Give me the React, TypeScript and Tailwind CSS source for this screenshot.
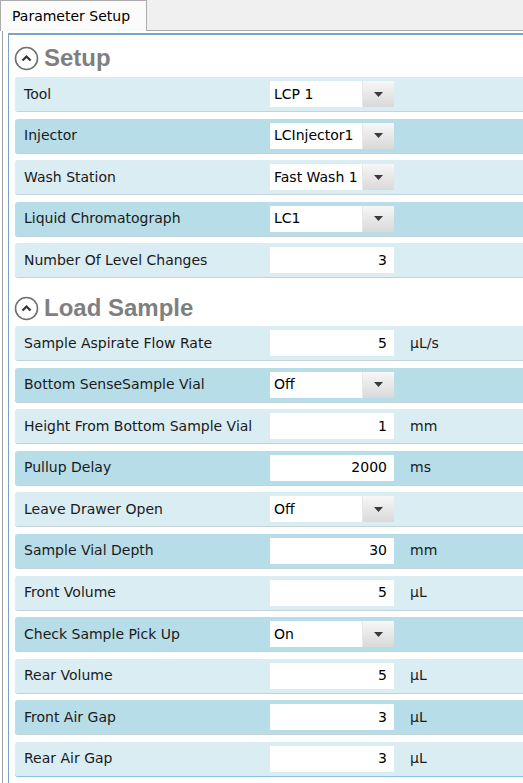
import React from "react";

type Field =
  | { label: string; kind: "select"; value: string }
  | { label: string; kind: "number"; value: string; unit?: string };

const setupFields: Field[] = [
  { label: "Tool", kind: "select", value: "LCP 1" },
  { label: "Injector", kind: "select", value: "LCInjector1" },
  { label: "Wash Station", kind: "select", value: "Fast Wash 1" },
  { label: "Liquid Chromatograph", kind: "select", value: "LC1" },
  { label: "Number Of Level Changes", kind: "number", value: "3" },
];

const loadFields: Field[] = [
  { label: "Sample Aspirate Flow Rate", kind: "number", value: "5", unit: "µL/s" },
  { label: "Bottom SenseSample Vial", kind: "select", value: "Off" },
  { label: "Height From Bottom Sample Vial", kind: "number", value: "1", unit: "mm" },
  { label: "Pullup Delay", kind: "number", value: "2000", unit: "ms" },
  { label: "Leave Drawer Open", kind: "select", value: "Off" },
  { label: "Sample Vial Depth", kind: "number", value: "30", unit: "mm" },
  { label: "Front Volume", kind: "number", value: "5", unit: "µL" },
  { label: "Check Sample Pick Up", kind: "select", value: "On" },
  { label: "Rear Volume", kind: "number", value: "5", unit: "µL" },
  { label: "Front Air Gap", kind: "number", value: "3", unit: "µL" },
  { label: "Rear Air Gap", kind: "number", value: "3", unit: "µL" },
];

function SectionHeader({ title, className }: { title: string; className: string }) {
  return (
    <div className={`flex items-center h-[36px] -ml-[1px] ${className}`}>
      <svg width="25" height="25" viewBox="0 0 25 25" className="mr-[5px]">
        <circle cx="12.5" cy="12.5" r="11" fill="white" stroke="#6f6f6f" strokeWidth="1.6" />
        <path d="M8.5 14.5 L12.5 10.5 L16.5 14.5" fill="none" stroke="#333" strokeWidth="2.2" />
      </svg>
      <span className="font-['Liberation_Sans',Arial,sans-serif] font-bold text-[24px] text-[#7f7f7f] leading-none">
        {title}
      </span>
    </div>
  );
}

function Row({ field, index, last }: { field: Field; index: number; last?: boolean }) {
  const dark = index % 2 === 1;
  return (
    <div
      className={`flex items-center h-[35px] pl-[9px] rounded-l-[3px] border-b ${
        last ? "border-[#8cc4de]" : "border-[#c3d3d8]"
      } ${dark ? "bg-[#b7dde8]" : "bg-[#daedf3]"}`}
    >
      <div className="w-[246px] shrink-0 text-[#1a1a1a]">{field.label}</div>
      {field.kind === "select" ? (
        <div className="flex w-[124px] h-[26px] bg-white">
          <div className="flex-1 flex items-center pl-[4px] text-black">{field.value}</div>
          <div className="w-[32px] h-full flex items-center justify-center bg-gradient-to-b from-[#f7f7f7] to-[#d9d9d9] border-l border-[#e8e8e8]">
            <svg width="9" height="5" viewBox="0 0 9 5">
              <path d="M0 0 H9 L4.5 5 Z" fill="#3a3a3a" />
            </svg>
          </div>
        </div>
      ) : (
        <div className="flex items-center justify-end w-[124px] h-[26px] bg-white pr-[7px] text-black">
          {field.value}
        </div>
      )}
      {field.kind === "number" && field.unit && (
        <div className="ml-[16px] text-[#1a1a1a]">{field.unit}</div>
      )}
    </div>
  );
}

export default function App() {
  return (
    <div className="w-[523px] h-[783px] overflow-hidden bg-white flex flex-col font-['DejaVu_Sans',Tahoma,sans-serif] text-[14px]">
      <div className="flex h-[31px] shrink-0 bg-[#f0f0f0]">
        <div className="w-[147px] bg-[#fbfbfb] border border-b-0 border-[#acacac] flex items-center pl-[11px] text-[14px] text-black">
          Parameter Setup
        </div>
        <div className="flex-1 border-b border-[#acacac]" />
      </div>
      <div className="flex-1 flex ml-[2px] border-l border-[#a0a0a0]">
        <div className="flex-1 ml-[5px] mt-[2px] border-t-2 border-l border-[#7aa3c9] pl-[6px] overflow-hidden">
          <SectionHeader title="Setup" className="mt-[5px] mb-[1px]" />
          <div className="flex flex-col gap-[6.5px]">
            {setupFields.map((f, i) => (
              <Row key={f.label} field={f} index={i} />
            ))}
          </div>
          <SectionHeader title="Load Sample" className="mt-[12px]" />
          <div className="flex flex-col gap-[6.6px]">
            {loadFields.map((f, i) => (
              <Row key={f.label} field={f} index={i} last={i === loadFields.length - 1} />
            ))}
          </div>
        </div>
      </div>
    </div>
  );
}
